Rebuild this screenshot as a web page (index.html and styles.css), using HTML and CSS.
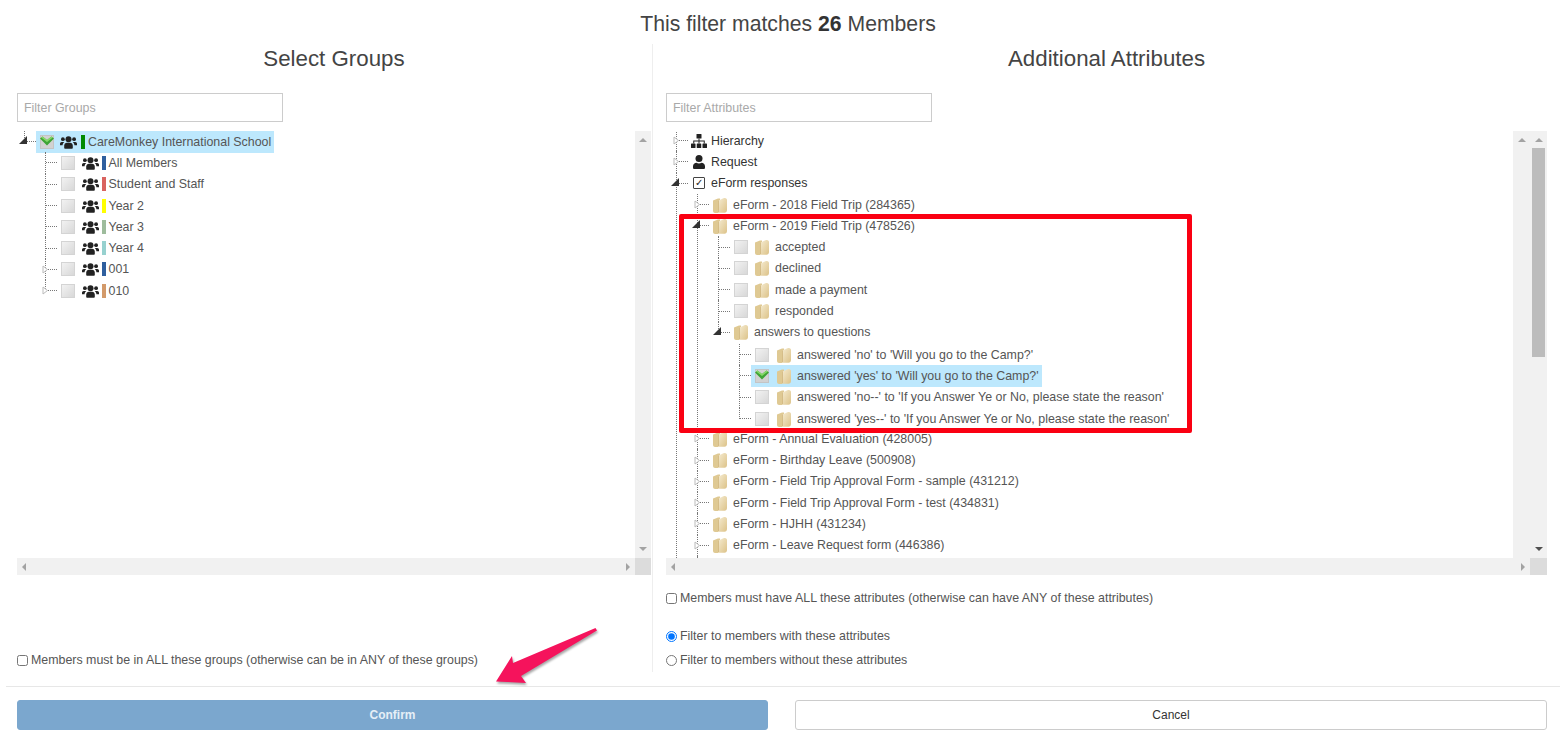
FILE: index.html
```html
<!DOCTYPE html>
<html lang="en">
<head>
  <meta charset="UTF-8" />
  <title>Filter Members</title>
  <meta name="viewport" content="width=device-width, initial-scale=1.0" />
  <link rel="stylesheet" href="styles.css">
</head>
<body>
  <!-- shared icons -->
  <svg class="defs" width="0" height="0">
    <symbol id="i-users" viewBox="0 0 17 14">
      <circle cx="8.5" cy="4.2" r="3"/>
      <circle cx="2.9" cy="4.2" r="1.9"/>
      <circle cx="14.1" cy="4.2" r="1.9"/>
      <path d="M4.2 13v-2.2c0-1.9 1.3-3 2.6-3h3.4c1.3 0 2.6 1.1 2.6 3V13c0 .5-.4.8-.9.8H5.100c-.5 0-.9-.3-.9-.8z"/>
      <path d="M0 10.200V8.700c0-1 .8-1.800 1.700-1.800h1.700c.3 0 .6.1.8.3-1 .7-1.500 1.800-1.600 3H.6c-.3 0-.6 0-.6 0z"/>
      <path d="M17 10.200V8.700c0-1-.8-1.800-1.700-1.800h-1.700c-.3 0-.6.1-.8.3 1 .7 1.500 1.800 1.600 3h2c.3 0 .6 0 .6 0z"/>
    </symbol>
    <symbol id="i-sitemap" viewBox="0 0 16 14">
      <rect x="5.500" y="0" width="5" height="4.500" rx=".6"/>
      <rect x="0" y="9.500" width="4.500" height="4.500" rx=".6"/>
      <rect x="5.750" y="9.500" width="4.500" height="4.500" rx=".6"/>
      <rect x="11.500" y="9.500" width="4.500" height="4.500" rx=".6"/>
      <path d="M7.500 4.500h1v2h5.250v3h-1v-2H8.500v2h-1v-2H3.250v2h-1v-3H7.500z"/>
    </symbol>
    <symbol id="i-user" viewBox="0 0 12 14">
      <circle cx="6" cy="3.500" r="3.500"/>
      <path d="M0 12.700v-1.500C0 9 1.800 7.800 3.400 7.800c.8.400 1.700.6 2.600.6s1.800-.2 2.600-.6c1.600 0 3.400 1.200 3.400 3.400v1.500c0 .8-.6 1.300-1.300 1.300H1.300C.6 14 0 13.500 0 12.700z"/>
    </symbol>
    <linearGradient id="folder-a" x1="0" y1="0" x2="1" y2="1">
      <stop offset="0" stop-color="#f5ebd0"/>
      <stop offset="1" stop-color="#dcc288"/>
    </linearGradient>
    <symbol id="i-folder" viewBox="0 0 14 16">
      <path fill="#dfc993" d="M0 3.500 5 1.500h2v13l-2 1.500H2c-1 0-2-.8-2-2z"/>
      <path fill="url(#folder-a)" d="M5.500 3.500 11 1c1.500 0 3 .6 3 2v10c0 1.600-1 2.800-2.500 2.800H6.800c-.8 0-1.300-.6-1.300-1.300z"/>
      <path fill="#c9ad72" d="M5.200 3.500h.6V15h-.6z"/>
    </symbol>
    <symbol id="i-open" viewBox="0 0 9 8">
      <path d="M8 0v8H0z"/>
    </symbol>
    <symbol id="i-closed" viewBox="0 0 7 9">
      <path d="M1 1l4.500 3.500L1 8z" fill="#fff" stroke="#bbb"/>
    </symbol>
    <symbol id="i-tick" viewBox="0 0 14 11">
      <path fill="#3fa536" d="M0 2.500 2.500.5 7 4 11.500.5 14 2.500 7 9.500z"/>
      <path fill="#86da68" d="M2.500.5 7 4 11.500.5 12.800 1.500 7 6 1.200 1.500z"/>
    </symbol>
  </svg>

  <div class="page">
    <div class="match-title">This filter matches <b>26</b> Members</div>

    <div class="columns">
      <!-- Groups -->
      <section class="col col-left">
        <h2>Select Groups</h2>
        <input class="filter" type="text" placeholder="Filter Groups">
        <div class="panel panel-left">
          <div class="panel-body">
            <ul class="tree">
              <li class="last">
                <div class="row">
                  <span class="sw"><svg class="exp exp-open"><use href="#i-open"/></svg></span>
                  <span class="node on root-node">
                    <span class="cb checked"><svg><use href="#i-tick"/></svg></span>
                    <svg class="ico"><use href="#i-users"/></svg>
                    <span class="bar green"></span>
                    <span class="txt">CareMonkey International School</span>
                  </span>
                </div>
                <ul class="kids">
                  <li><div class="row"><span class="sw"></span><span class="node"><span class="cb"></span><svg class="ico"><use href="#i-users"/></svg><span class="bar blue"></span><span class="txt">All Members</span></span></div></li>
                  <li><div class="row"><span class="sw"></span><span class="node"><span class="cb"></span><svg class="ico"><use href="#i-users"/></svg><span class="bar red"></span><span class="txt">Student and Staff</span></span></div></li>
                  <li><div class="row"><span class="sw"></span><span class="node"><span class="cb"></span><svg class="ico"><use href="#i-users"/></svg><span class="bar yellow"></span><span class="txt">Year 2</span></span></div></li>
                  <li><div class="row"><span class="sw"></span><span class="node"><span class="cb"></span><svg class="ico"><use href="#i-users"/></svg><span class="bar sage"></span><span class="txt">Year 3</span></span></div></li>
                  <li><div class="row"><span class="sw"></span><span class="node"><span class="cb"></span><svg class="ico"><use href="#i-users"/></svg><span class="bar teal"></span><span class="txt">Year 4</span></span></div></li>
                  <li><div class="row"><span class="sw"><svg class="exp exp-closed"><use href="#i-closed"/></svg></span><span class="node"><span class="cb"></span><svg class="ico"><use href="#i-users"/></svg><span class="bar blue"></span><span class="txt">001</span></span></div></li>
                  <li class="last"><div class="row"><span class="sw"><svg class="exp exp-closed"><use href="#i-closed"/></svg></span><span class="node"><span class="cb"></span><svg class="ico"><use href="#i-users"/></svg><span class="bar tan"></span><span class="txt">010</span></span></div></li>
                </ul>
              </li>
            </ul>
          </div>
          <div class="vtrack"><i class="up"></i><i class="down down-light"></i></div>
          <div class="htrack"><i class="lt"></i><i class="rt"></i></div>
          <div class="corner"></div>
        </div>
        <label class="opt opt-bottom"><input type="checkbox"> Members must be in ALL these groups (otherwise can be in ANY of these groups)</label>
      </section>

      <!-- Attributes -->
      <section class="col col-right">
        <h2>Additional Attributes</h2>
        <input class="filter" type="text" placeholder="Filter Attributes">
        <div class="panel panel-right">
          <div class="panel-body">
            <ul class="tree tree-right">
              <li><div class="row"><span class="sw"><svg class="exp exp-closed"><use href="#i-closed"/></svg></span><span class="node dark"><svg class="ico ico-map"><use href="#i-sitemap"/></svg><span class="txt">Hierarchy</span></span></div></li>
              <li><div class="row"><span class="sw"><svg class="exp exp-closed"><use href="#i-closed"/></svg></span><span class="node dark"><svg class="ico ico-user"><use href="#i-user"/></svg><span class="txt">Request</span></span></div></li>
              <li>
                <div class="row"><span class="sw"><svg class="exp exp-open"><use href="#i-open"/></svg></span><span class="node dark"><span class="box-tick">&#10003;</span><span class="txt">eForm responses</span></span></div>
                <ul class="kids">
                  <li><div class="row"><span class="sw"><svg class="exp exp-closed"><use href="#i-closed"/></svg></span><span class="node"><svg class="fld"><use href="#i-folder"/></svg><span class="txt">eForm - 2018 Field Trip (284365)</span></span></div></li>
                  <li>
                    <div class="row"><span class="sw"><svg class="exp exp-open"><use href="#i-open"/></svg></span><span class="node"><svg class="fld"><use href="#i-folder"/></svg><span class="txt">eForm - 2019 Field Trip (478526)</span></span></div>
                    <ul class="kids">
                      <li><div class="row"><span class="sw"></span><span class="node"><span class="cb"></span><svg class="fld"><use href="#i-folder"/></svg><span class="txt">accepted</span></span></div></li>
                      <li><div class="row"><span class="sw"></span><span class="node"><span class="cb"></span><svg class="fld"><use href="#i-folder"/></svg><span class="txt">declined</span></span></div></li>
                      <li><div class="row"><span class="sw"></span><span class="node"><span class="cb"></span><svg class="fld"><use href="#i-folder"/></svg><span class="txt">made a payment</span></span></div></li>
                      <li><div class="row"><span class="sw"></span><span class="node"><span class="cb"></span><svg class="fld"><use href="#i-folder"/></svg><span class="txt">responded</span></span></div></li>
                      <li class="last">
                        <div class="row"><span class="sw"><svg class="exp exp-open"><use href="#i-open"/></svg></span><span class="node"><svg class="fld"><use href="#i-folder"/></svg><span class="txt">answers to questions</span></span></div>
                        <ul class="kids answers">
                          <li><div class="row"><span class="sw"></span><span class="node"><span class="cb"></span><svg class="fld"><use href="#i-folder"/></svg><span class="txt">answered 'no' to 'Will you go to the Camp?'</span></span></div></li>
                          <li><div class="row"><span class="sw"></span><span class="node on"><span class="cb checked"><svg><use href="#i-tick"/></svg></span><svg class="fld"><use href="#i-folder"/></svg><span class="txt">answered 'yes' to 'Will you go to the Camp?'</span></span></div></li>
                          <li><div class="row"><span class="sw"></span><span class="node"><span class="cb"></span><svg class="fld"><use href="#i-folder"/></svg><span class="txt">answered 'no--' to 'If you Answer Ye or No, please state the reason'</span></span></div></li>
                          <li class="last"><div class="row"><span class="sw"></span><span class="node"><span class="cb"></span><svg class="fld"><use href="#i-folder"/></svg><span class="txt">answered 'yes--' to 'If you Answer Ye or No, please state the reason'</span></span></div></li>
                        </ul>
                      </li>
                    </ul>
                  </li>
                  <li><div class="row"><span class="sw"><svg class="exp exp-closed"><use href="#i-closed"/></svg></span><span class="node"><svg class="fld"><use href="#i-folder"/></svg><span class="txt">eForm - Annual Evaluation (428005)</span></span></div></li>
                  <li><div class="row"><span class="sw"><svg class="exp exp-closed"><use href="#i-closed"/></svg></span><span class="node"><svg class="fld"><use href="#i-folder"/></svg><span class="txt">eForm - Birthday Leave (500908)</span></span></div></li>
                  <li><div class="row"><span class="sw"><svg class="exp exp-closed"><use href="#i-closed"/></svg></span><span class="node"><svg class="fld"><use href="#i-folder"/></svg><span class="txt">eForm - Field Trip Approval Form - sample (431212)</span></span></div></li>
                  <li><div class="row"><span class="sw"><svg class="exp exp-closed"><use href="#i-closed"/></svg></span><span class="node"><svg class="fld"><use href="#i-folder"/></svg><span class="txt">eForm - Field Trip Approval Form - test (434831)</span></span></div></li>
                  <li><div class="row"><span class="sw"><svg class="exp exp-closed"><use href="#i-closed"/></svg></span><span class="node"><svg class="fld"><use href="#i-folder"/></svg><span class="txt">eForm - HJHH (431234)</span></span></div></li>
                  <li><div class="row"><span class="sw"><svg class="exp exp-closed"><use href="#i-closed"/></svg></span><span class="node"><svg class="fld"><use href="#i-folder"/></svg><span class="txt">eForm - Leave Request form (446386)</span></span></div></li>
                  <li class="spacer"></li>
                </ul>
              </li>
            </ul>
          </div>
          <div class="vtrack vtrack-inner"><i class="up"></i></div>
          <div class="vtrack vtrack-outer"><i class="up"></i><b class="thumb"></b><i class="down"></i></div>
          <div class="htrack"><i class="lt"></i><i class="rt"></i></div>
          <div class="corner"></div>
        </div>
        <label class="opt opt-all"><input type="checkbox"> Members must have ALL these attributes (otherwise can have ANY of these attributes)</label>
        <label class="opt opt-with"><input type="radio" name="with" checked> Filter to members with these attributes</label>
        <label class="opt opt-without"><input type="radio" name="with"> Filter to members without these attributes</label>
      </section>
    </div>

    <div class="footer">
      <button class="btn btn-confirm" type="button">Confirm</button>
      <button class="btn btn-cancel" type="button">Cancel</button>
    </div>

    <!-- annotations on top of the screenshot -->
    <div class="callout"></div>
    <svg class="pointer" width="120" height="70" viewBox="0 0 120 70">
      <path fill="#f5135c" d="M114.500 7 116 9.500 40 55 45 62 15 60.500 31 35 32 42z"/>
    </svg>
  </div>
</body>
</html>
```

FILE: styles.css
```css
* {
  box-sizing: border-box;
}

body {
  margin: 0;
  font-family: "Liberation Sans", Arial, sans-serif;
  background: #fff;
  color: #555;
  overflow: hidden;
}

.defs {
  position: absolute;
}

.page {
  position: relative;
  height: 743px;
  display: flex;
  flex-direction: column;
}

.match-title {
  height: 44px;
  padding: 12px 0 0 8px;
  font-size: 21.2px;
  line-height: 24px;
  text-align: center;
  color: #444;
}

.match-title b {
  color: #333;
}

.columns {
  display: flex;
  height: 628px;
}

.col {
  display: flex;
  flex-direction: column;
}

.col-left {
  width: 653px;
  padding: 0 1px 0 17px;
  border-right: 1px solid #eee;
}

.col-right {
  flex: 1;
  padding: 0 21px 0 13px;
}

h2 {
  margin: 0;
  height: 49px;
  font-size: 22.300px;
  font-weight: normal;
  line-height: 30px;
  text-align: center;
  color: #444;
}

.filter {
  width: 266px;
  height: 29px;
  padding: 0 6px;
  border: 1px solid #ccc;
  font-family: inherit;
  font-size: 12.400px;
  color: #555;
}

.filter::placeholder {
  color: #a9a9a9;
}

/* tree panel with its painted scrollbars */
.panel {
  display: grid;
  height: 444px;
  margin-top: 9px;
  grid-template-rows: 427px 17px;
}

.panel-left {
  grid-template-columns: 1fr 16px;
}

.panel-right {
  grid-template-columns: 1fr 17px 17px;
}

.panel-body {
  overflow: hidden;
}

.vtrack {
  display: flex;
  flex-direction: column;
  align-items: center;
  background: #f1f1f1;
  padding: 7px 0;
}

.vtrack i.down {
  margin-top: auto;
}

.thumb {
  width: 13px;
  height: 209px;
  margin-top: 6px;
  background: #bcbcbc;
}

.htrack {
  display: flex;
  align-items: center;
  justify-content: space-between;
  padding: 0 5px;
  background: #f1f1f1;
}

.panel-right .htrack {
  grid-column: 1 / span 2;
}

.corner {
  background: #dcdcdc;
}

.up {
  width: 0;
  height: 0;
  border: 4px solid transparent;
  border-top: 0;
  border-bottom: 4px solid #a3a3a3;
}

.down {
  width: 0;
  height: 0;
  border: 4px solid transparent;
  border-bottom: 0;
  border-top: 4px solid #505050;
}

.down-light {
  border-top-color: #a3a3a3;
}

.lt {
  width: 0;
  height: 0;
  border: 4px solid transparent;
  border-left: 0;
  border-right: 4px solid #a3a3a3;
}

.rt {
  width: 0;
  height: 0;
  border: 4px solid transparent;
  border-right: 0;
  border-left: 4px solid #a3a3a3;
}

/* tree */
ul {
  list-style: none;
  margin: 0;
  padding: 0;
}

.tree {
  margin-left: 7px;
  font-size: 12.400px;
}

.tree-right {
  margin-left: 10px;
  margin-top: -1px;
}

.kids {
  margin-left: 21px;
}

.answers {
  padding-top: 1px;
  margin-bottom: -1px;
}

li {
  position: relative;
}

li::before {
  content: "";
  position: absolute;
  left: 0;
  top: 0;
  bottom: 0;
  border-left: 1px dotted #777;
}

li.last::before {
  bottom: auto;
  height: 11px;
}

.spacer {
  height: 40px;
}

.row {
  display: flex;
  align-items: center;
  height: 21.3px;
}

.sw {
  position: relative;
  flex: none;
  width: 11px;
  margin-left: 1px;
  border-top: 1px dotted #777;
}

.exp {
  position: absolute;
}

.exp-open {
  left: -6px;
  top: -6px;
  width: 9px;
  height: 8px;
  fill: #333;
}

.exp-closed {
  left: -4px;
  top: -5px;
  width: 7px;
  height: 9px;
}

.node {
  display: flex;
  align-items: center;
  height: 22px;
  padding: 0 3px 0 4px;
  white-space: nowrap;
}

.node.on {
  background: #bde8fd;
}

.node.dark {
  color: #333;
}

.cb {
  flex: none;
  display: flex;
  align-items: center;
  justify-content: center;
  width: 14px;
  height: 14px;
  margin-right: 7px;
  border: 1px solid #d4d4d4;
  background: linear-gradient(135deg, #f2f2f2, #d8d8d8);
}

.cb.checked {
  align-items: flex-start;
  border-color: #c4c4c4;
  background: #d2d2d2;
}

.cb svg {
  flex: none;
  width: 14px;
  height: 11px;
}

.answers .cb {
  margin-right: 8px;
}

.root-node .cb {
  margin-right: 6px;
}

.ico {
  flex: none;
  width: 17px;
  height: 14px;
  margin-right: 3px;
  fill: #222;
}

.root-node .ico {
  margin-right: 4px;
}

.ico-map {
  width: 16px;
  margin-left: -1px;
  margin-right: 4px;
}

.ico-user {
  width: 12px;
  margin-left: 1px;
  margin-right: 6px;
}

.box-tick {
  flex: none;
  width: 12px;
  height: 12px;
  margin: 0 6px 0 1px;
  border: 1px solid #444;
  border-radius: 1px;
  font-size: 10px;
  line-height: 10px;
  text-align: center;
  color: #222;
}

.fld {
  flex: none;
  width: 14px;
  height: 16px;
  margin-right: 6px;
}

.bar {
  flex: none;
  width: 3.500px;
  height: 14px;
  margin-right: 3px;
}

.root-node .bar {
  margin-right: 3.500px;
}

.green { background: #008a00; }
.blue { background: #2f5f9e; }
.red { background: #d9635f; }
.yellow { background: #ffff00; }
.sage { background: #9ebc9c; }
.teal { background: #97d1cf; }
.tan { background: #d39a6a; }

/* options under the trees */
.opt {
  display: flex;
  align-items: center;
  gap: 1px;
  font-size: 12.400px;
  line-height: 16px;
}

.opt input {
  width: 11px;
  height: 11px;
  margin: 0 2px 0 0;
}

.opt-bottom {
  margin-top: auto;
  margin-bottom: 4px;
}

.opt-all {
  margin-top: 15px;
}

.opt-with {
  margin-top: 22px;
}

.opt-without {
  margin-top: 8px;
}

/* footer */
.footer {
  display: flex;
  gap: 27px;
  margin: 14px 8px 0 6px;
  padding: 13px 13px 0 11px;
  border-top: 1px solid #e7e7e7;
}

.btn {
  height: 30px;
  border-radius: 3px;
  font-family: inherit;
  font-size: 12px;
}

.btn-confirm {
  flex: 0 0 751px;
  border: 1px solid #7ba7ce;
  background: #7ba7ce;
  color: #e6eff7;
  font-weight: bold;
}

.btn-cancel {
  flex: 1;
  border: 1px solid #ccc;
  background: #fff;
  color: #333;
}

/* annotations */
.callout {
  position: absolute;
  left: 679px;
  top: 214px;
  width: 513px;
  height: 219px;
  border: 5.500px solid #fa0012;
  border-radius: 2px;
}

.pointer {
  position: absolute;
  left: 481px;
  top: 621px;
  filter: drop-shadow(1px 2px 1px rgba(0, 0, 0, 0.35));
}
```
